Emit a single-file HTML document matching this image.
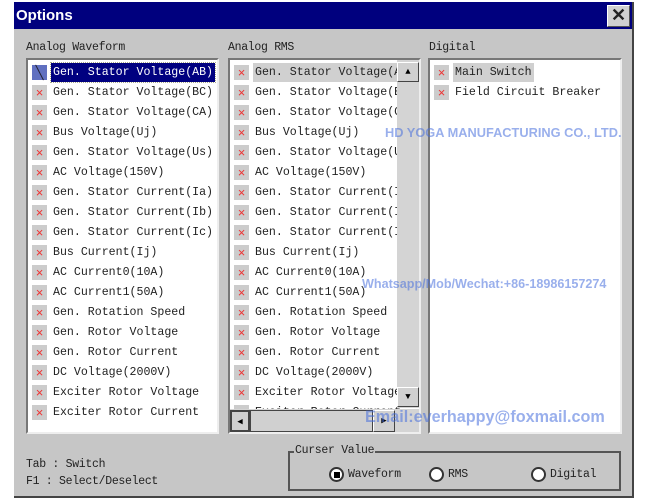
<!DOCTYPE html>
<html><head><meta charset="utf-8"><style>
*{margin:0;padding:0;box-sizing:border-box}
body{width:650px;height:500px;background:#fff;position:relative;overflow:hidden;font-family:"Liberation Mono",monospace}
.win{position:absolute;left:14px;top:2px;width:620px;height:496px;background:#c6c6c6;border-right:2px solid #444;border-bottom:2px solid #444}
.title{position:absolute;left:0;top:0;width:618px;height:27px;background:#00007e;color:#fff;font:bold 15px "Liberation Sans",sans-serif;padding:5px 0 0 2px}
.close{position:absolute;left:593px;top:3px;width:23px;height:22px;background:#d0d0d0;border:1px solid #fff;border-right-color:#555;border-bottom-color:#555;color:#222;font:bold 18px "Liberation Sans",sans-serif;text-align:center;line-height:19px}
.lbl{position:absolute;font-size:11.5px;color:#222;letter-spacing:-0.3px}
.list{position:absolute;background:#fff;border:2px solid #777;border-right-color:#eee;border-bottom-color:#eee;overflow:hidden}
.row{position:absolute;left:2px;height:19px;font-size:11.6px;line-height:19px;color:#222;white-space:nowrap}
.row i{position:absolute;left:2px;top:2px;width:15px;height:15px;background:#ccc;color:#e33;font-style:normal;font-size:13px;line-height:15px;text-align:center;font-family:"Liberation Sans",sans-serif}
.row span{position:absolute;left:21px;top:0;padding:0 2px}
.sel span{background:#000080;color:#fff;outline:1px dotted #aa8}
.sel i{background:#6070c0;color:#223}
.foc span{background:#d0d0d0}
.btn{position:absolute;background:#d0d0d0;border:1px solid #fff;border-right-color:#444;border-bottom-color:#444;font-size:9px;text-align:center;color:#000}
.wm{position:absolute;font:bold 12.8px "Liberation Sans",sans-serif;color:rgba(70,110,220,.55);white-space:nowrap}
.radio{position:absolute;width:15px;height:15px;border-radius:50%;background:#fff;border:2px solid #333}
</style></head><body>
<div class="win">
<div class="title">Options</div>
<div class="close">✕</div>
<div class="lbl" style="left:12px;top:39px">Analog Waveform</div>
<div class="lbl" style="left:214px;top:39px">Analog RMS</div>
<div class="lbl" style="left:415px;top:39px">Digital</div>

<div class="list" style="left:12px;top:56px;width:193px;height:376px">
<div class="row sel" style="top:3px"><i>╲</i><span>Gen. Stator Voltage(AB)</span></div>
<div class="row" style="top:23px"><i>×</i><span>Gen. Stator Voltage(BC)</span></div>
<div class="row" style="top:43px"><i>×</i><span>Gen. Stator Voltage(CA)</span></div>
<div class="row" style="top:63px"><i>×</i><span>Bus Voltage(Uj)</span></div>
<div class="row" style="top:83px"><i>×</i><span>Gen. Stator Voltage(Us)</span></div>
<div class="row" style="top:103px"><i>×</i><span>AC Voltage(150V)</span></div>
<div class="row" style="top:123px"><i>×</i><span>Gen. Stator Current(Ia)</span></div>
<div class="row" style="top:143px"><i>×</i><span>Gen. Stator Current(Ib)</span></div>
<div class="row" style="top:163px"><i>×</i><span>Gen. Stator Current(Ic)</span></div>
<div class="row" style="top:183px"><i>×</i><span>Bus Current(Ij)</span></div>
<div class="row" style="top:203px"><i>×</i><span>AC Current0(10A)</span></div>
<div class="row" style="top:223px"><i>×</i><span>AC Current1(50A)</span></div>
<div class="row" style="top:243px"><i>×</i><span>Gen. Rotation Speed</span></div>
<div class="row" style="top:263px"><i>×</i><span>Gen. Rotor Voltage</span></div>
<div class="row" style="top:283px"><i>×</i><span>Gen. Rotor Current</span></div>
<div class="row" style="top:303px"><i>×</i><span>DC Voltage(2000V)</span></div>
<div class="row" style="top:323px"><i>×</i><span>Exciter Rotor Voltage</span></div>
<div class="row" style="top:343px"><i>×</i><span>Exciter Rotor Current</span></div>
</div>

<div class="list" style="left:214px;top:56px;width:193px;height:376px">
<div class="row foc" style="top:3px"><i>×</i><span>Gen. Stator Voltage(AB)</span></div>
<div class="row" style="top:23px"><i>×</i><span>Gen. Stator Voltage(BC)</span></div>
<div class="row" style="top:43px"><i>×</i><span>Gen. Stator Voltage(CA)</span></div>
<div class="row" style="top:63px"><i>×</i><span>Bus Voltage(Uj)</span></div>
<div class="row" style="top:83px"><i>×</i><span>Gen. Stator Voltage(Us)</span></div>
<div class="row" style="top:103px"><i>×</i><span>AC Voltage(150V)</span></div>
<div class="row" style="top:123px"><i>×</i><span>Gen. Stator Current(Ia)</span></div>
<div class="row" style="top:143px"><i>×</i><span>Gen. Stator Current(Ib)</span></div>
<div class="row" style="top:163px"><i>×</i><span>Gen. Stator Current(Ic)</span></div>
<div class="row" style="top:183px"><i>×</i><span>Bus Current(Ij)</span></div>
<div class="row" style="top:203px"><i>×</i><span>AC Current0(10A)</span></div>
<div class="row" style="top:223px"><i>×</i><span>AC Current1(50A)</span></div>
<div class="row" style="top:243px"><i>×</i><span>Gen. Rotation Speed</span></div>
<div class="row" style="top:263px"><i>×</i><span>Gen. Rotor Voltage</span></div>
<div class="row" style="top:283px"><i>×</i><span>Gen. Rotor Current</span></div>
<div class="row" style="top:303px"><i>×</i><span>DC Voltage(2000V)</span></div>
<div class="row" style="top:323px"><i>×</i><span>Exciter Rotor Voltage</span></div>
<div class="row" style="top:343px"><i>×</i><span>Exciter Rotor Current</span></div>
<div style="position:absolute;left:167px;top:0;width:22px;height:348px;background:#d4d4d4"></div>
<div class="btn" style="left:167px;top:2px;width:22px;height:20px;line-height:18px">▲</div>
<div class="btn" style="left:167px;top:327px;width:22px;height:20px;line-height:18px">▼</div>
<div style="position:absolute;left:0;top:349px;width:189px;height:23px;background:#d4d4d4"></div>
<div class="btn" style="left:0;top:350px;width:20px;height:22px;line-height:20px;border:2px solid #444">◀</div>
<div class="btn" style="left:20px;top:350px;width:123px;height:22px;border-color:#444"></div>
<div class="btn" style="left:143px;top:350px;width:22px;height:22px;line-height:20px">▶</div>
</div>

<div class="list" style="left:414px;top:56px;width:194px;height:376px">
<div class="row foc" style="top:3px"><i>×</i><span>Main Switch</span></div>
<div class="row" style="top:23px"><i>×</i><span>Field Circuit Breaker</span></div>
</div>

<div class="lbl" style="left:12px;top:456px">Tab : Switch</div>
<div class="lbl" style="left:12px;top:473px">F1 : Select/Deselect</div>

<div style="position:absolute;left:274px;top:449px;width:333px;height:40px;border:2px solid #555"></div>
<div class="lbl" style="left:280px;top:442px;background:#c6c6c6;padding:0 1px">Curser Value</div>
<div class="radio" style="left:315px;top:465px"><div style="position:absolute;left:3px;top:3px;width:6px;height:6px;background:#000"></div></div>
<div class="lbl" style="left:334px;top:466px">Waveform</div>
<div class="radio" style="left:415px;top:465px"></div>
<div class="lbl" style="left:434px;top:466px">RMS</div>
<div class="radio" style="left:517px;top:465px"></div>
<div class="lbl" style="left:536px;top:466px">Digital</div>
</div>

<div class="wm" style="left:385px;top:125px">HD YOGA MANUFACTURING CO., LTD.</div>
<div class="wm" style="left:362px;top:277px;font-size:12.6px">Whatsapp/Mob/Wechat:+86-18986157274</div>
<div class="wm" style="left:365px;top:408px;font-size:16.2px">Email:everhappy@foxmail.com</div>
</body></html>
